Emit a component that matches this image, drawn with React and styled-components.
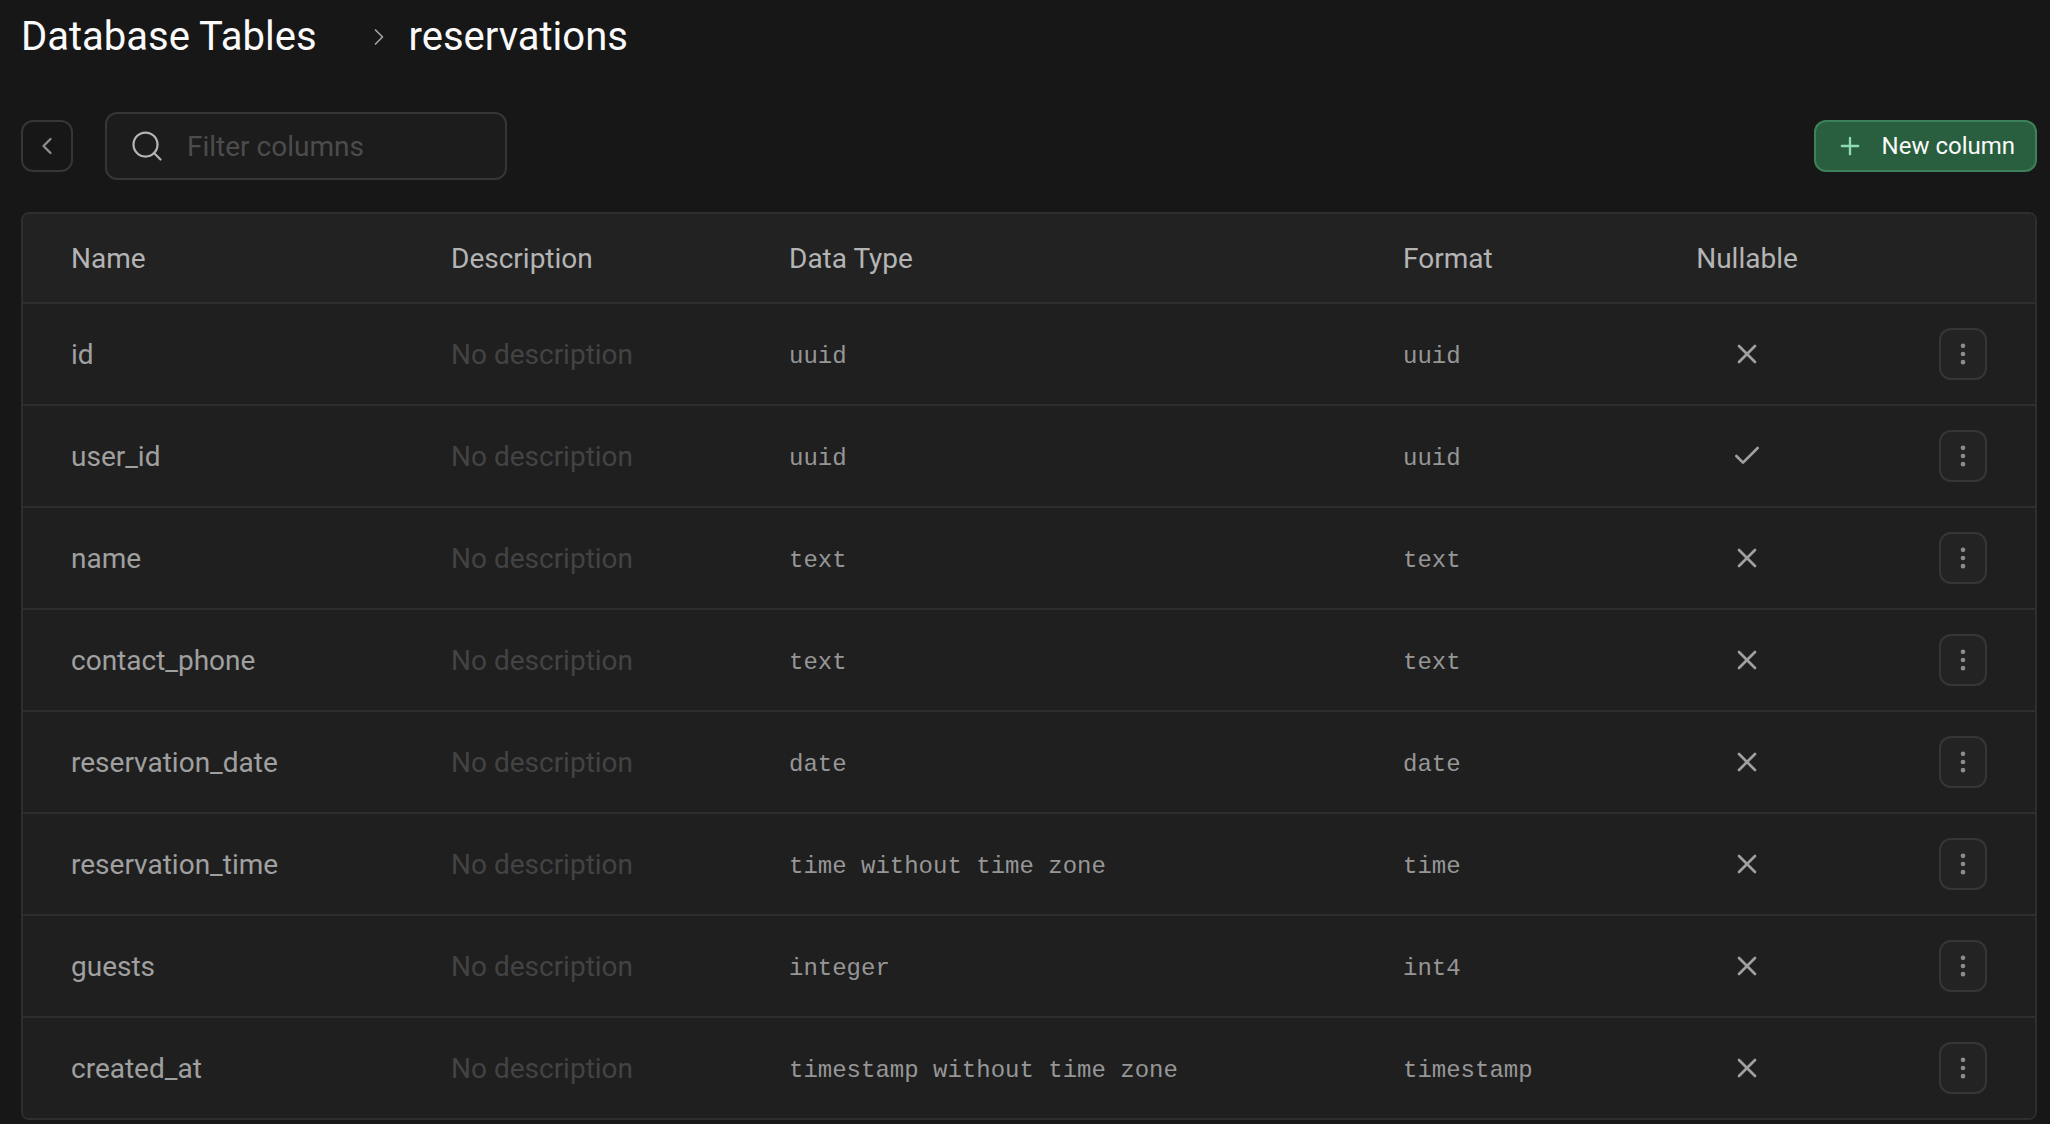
import React, { useState } from 'react';
import styled, { createGlobalStyle } from 'styled-components';
import { Check, ChevronLeft, ChevronRight, EllipsisVertical, Plus, Search, X } from 'lucide-react';

const sans = "Roboto, 'Liberation Sans', sans-serif";
const mono = "'Liberation Mono', 'DejaVu Sans Mono', monospace";

const GlobalStyle = createGlobalStyle`
  *, *::before, *::after {
    box-sizing: border-box;
  }
  body {
    margin: 0;
    background: #171717;
    color: #a0a0a0;
    font-family: ${sans};
  }
  button, input {
    font: inherit;
  }
  svg {
    display: block;
    flex: none;
  }
`;

const Page = styled.main`
  padding: 13px 13px 4px 21px;
`;

const Breadcrumb = styled.h1`
  display: flex;
  align-items: center;
  gap: 16px;
  margin: 0;
  color: #fafafa;
  font-size: 40px;
  font-weight: 400;
  line-height: 48px;

  svg {
    color: #a0a0a0;
  }
`;

const CrumbLink = styled.a`
  padding-right: 32px;
  color: inherit;
  text-decoration: none;
`;

const Toolbar = styled.div`
  display: flex;
  align-items: center;
  gap: 32px;
  margin: 51px 0 32px;
`;

const IconButton = styled.button`
  display: inline-flex;
  align-items: center;
  justify-content: center;
  width: ${({ $width }) => $width}px;
  height: 52px;
  padding: 0;
  border: 2px solid #363636;
  border-radius: 12px;
  background: ${({ $raised }) => ($raised ? '#232323' : 'transparent')};
  color: #8c8c8c;
  cursor: pointer;
`;

const SearchField = styled.label`
  display: flex;
  align-items: center;
  gap: 22px;
  width: 402px;
  height: 68px;
  padding: 0 22px;
  border: 2px solid #363636;
  border-radius: 12px;
  background: #1c1c1c;
  color: #b4b4b4;
`;

const SearchInput = styled.input`
  flex: 1;
  min-width: 0;
  padding: 2px 0 0;
  border: 0;
  outline: 0;
  background: transparent;
  color: #ededed;
  font-size: 28px;
  line-height: 40px;

  &::placeholder {
    color: #4c4c4c;
    opacity: 1;
  }
`;

const PrimaryButton = styled.button`
  display: inline-flex;
  align-items: center;
  gap: 18px;
  height: 52px;
  margin-left: auto;
  padding: 0 20px;
  border: 2px solid #3c8159;
  border-radius: 12px;
  background: #295f3e;
  color: #fafafa;
  font-size: 24px;
  line-height: 32px;
  cursor: pointer;

  svg {
    color: #8fdcb4;
  }
`;

const TableFrame = styled.div`
  overflow: hidden;
  border: 2px solid #2e2e2e;
  border-radius: 8px;
`;

const Table = styled.table`
  width: 100%;
  border-spacing: 0;
  table-layout: fixed;
  background: #1f1f1f;
  font-size: 28px;
  line-height: 40px;
`;

const Column = styled.col`
  width: ${({ $width }) => ($width ? `${$width}px` : 'auto')};
`;

const HeadCell = styled.th`
  padding: 25px 48px 23px;
  border-bottom: 2px solid #2e2e2e;
  background: #222222;
  color: #b4b4b4;
  font-weight: 400;
  text-align: ${({ $align = 'left' }) => $align};
`;

const Row = styled.tr`
  &:not(:last-child) > td {
    border-bottom: 2px solid #2e2e2e;
  }
`;

const Cell = styled.td`
  padding: 26px 48px 24px;
  color: ${({ $muted }) => ($muted ? '#434343' : '#a0a0a0')};
  white-space: nowrap;
`;

const IconCell = styled.td`
  padding: 24px 48px;
`;

const IconSlot = styled.div`
  display: flex;
  justify-content: ${({ $justify }) => $justify};
`;

const Code = styled.code`
  color: #969696;
  font-family: ${mono};
  font-size: 24px;
`;

const COLUMNS = [
  { name: 'id', type: 'uuid', format: 'uuid', nullable: false },
  { name: 'user_id', type: 'uuid', format: 'uuid', nullable: true },
  { name: 'name', type: 'text', format: 'text', nullable: false },
  { name: 'contact_phone', type: 'text', format: 'text', nullable: false },
  { name: 'reservation_date', type: 'date', format: 'date', nullable: false },
  { name: 'reservation_time', type: 'time without time zone', format: 'time', nullable: false },
  { name: 'guests', type: 'integer', format: 'int4', nullable: false },
  { name: 'created_at', type: 'timestamp without time zone', format: 'timestamp', nullable: false },
];

function ColumnRow({ column }) {
  const NullableIcon = column.nullable ? Check : X;
  return (
    <Row>
      <Cell>{column.name}</Cell>
      <Cell $muted>No description</Cell>
      <Cell>
        <Code>{column.type}</Code>
      </Cell>
      <Cell>
        <Code>{column.format}</Code>
      </Cell>
      <IconCell>
        <IconSlot $justify="center">
          <NullableIcon size={32} strokeWidth={2} />
        </IconSlot>
      </IconCell>
      <IconCell>
        <IconSlot $justify="flex-end">
          <IconButton type="button" $width={48} $raised aria-label="Column options">
            <EllipsisVertical size={28} />
          </IconButton>
        </IconSlot>
      </IconCell>
    </Row>
  );
}

export default function App() {
  const [filter, setFilter] = useState('');
  const visible = COLUMNS.filter((column) => column.name.includes(filter));

  return (
    <Page>
      <GlobalStyle />
      <Breadcrumb>
        <CrumbLink href="#tables">Database Tables</CrumbLink>
        <ChevronRight size={28} strokeWidth={1.5} />
        <span>reservations</span>
      </Breadcrumb>
      <Toolbar>
        <IconButton type="button" $width={52} aria-label="Back">
          <ChevronLeft size={28} />
        </IconButton>
        <SearchField>
          <Search size={36} strokeWidth={1.5} />
          <SearchInput
            type="text"
            aria-label="Filter columns"
            placeholder="Filter columns"
            value={filter}
            onChange={(event) => setFilter(event.target.value)}
          />
        </SearchField>
        <PrimaryButton type="button">
          <Plus size={28} />
          New column
        </PrimaryButton>
      </Toolbar>
      <TableFrame>
        <Table>
          <colgroup>
            <Column $width={380} />
            <Column $width={338} />
            <Column />
            <Column $width={292} />
            <Column $width={200} />
            <Column $width={188} />
          </colgroup>
          <thead>
            <tr>
              <HeadCell>Name</HeadCell>
              <HeadCell>Description</HeadCell>
              <HeadCell>Data Type</HeadCell>
              <HeadCell>Format</HeadCell>
              <HeadCell $align="center">Nullable</HeadCell>
              <HeadCell />
            </tr>
          </thead>
          <tbody>
            {visible.map((column) => (
              <ColumnRow key={column.name} column={column} />
            ))}
          </tbody>
        </Table>
      </TableFrame>
    </Page>
  );
}
